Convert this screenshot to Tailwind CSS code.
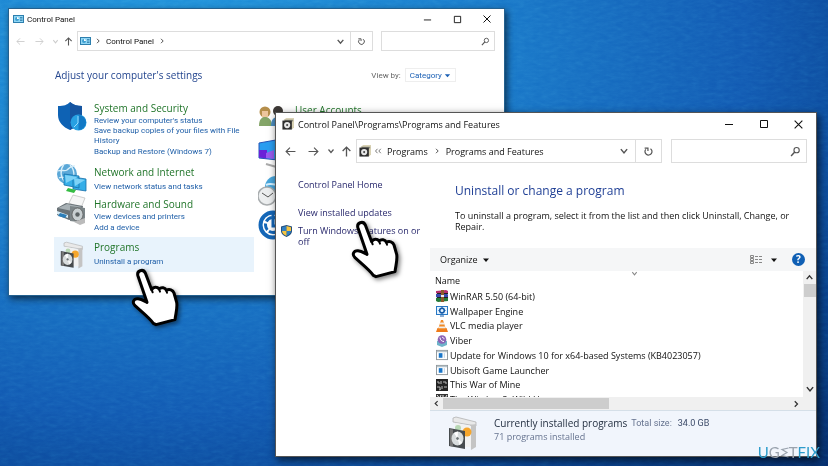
<!DOCTYPE html>
<html lang="en">
<head>
    <meta charset="UTF-8">
    <meta name="viewport" content="width=device-width, initial-scale=1.0">
    <title>Programs and Features</title>
    <script src="https://cdn.jsdelivr.net/npm/@tailwindcss/browser@4"></script>
</head>

<body class="font-['Open_Sans','Noto_Sans',sans-serif] text-[9px] leading-[11px] text-[#111]">
    <!-- shared icons -->
    <svg class="hidden">
        <symbol id="panel" viewBox="0 0 22 16">
            <rect x="1" y="1" width="20" height="14" fill="#8fd6f5" stroke="#2d7fae" stroke-width="2"/>
            <circle cx="8" cy="8" r="4" fill="#3f9fd0"/><path d="M8 8V4a4 4 0 0 1 4 4z" fill="#fff"/>
            <path d="M14 5h5M14 8h5M14 11h5" stroke="#27719f" stroke-width="1.5"/>
        </symbol>
        <symbol id="back" viewBox="0 0 10 10"><path d="M9.500 5H1M4.500 1.500L1 5l3.500 3.500" fill="none" stroke="currentColor"/></symbol>
        <symbol id="forward" viewBox="0 0 10 10"><path d="M.5 5H9M5.500 1.500L9 5 5.500 8.500" fill="none" stroke="currentColor"/></symbol>
        <symbol id="up" viewBox="0 0 10 10"><path d="M5 9.500V1M1.500 4.500L5 1l3.500 3.500" fill="none" stroke="currentColor" stroke-width="1.200"/></symbol>
        <symbol id="down" viewBox="0 0 8 8"><path d="M1.500 2.500L4 5.500l2.500-3" fill="none" stroke="currentColor" stroke-width="1.200"/></symbol>
        <symbol id="right" viewBox="0 0 8 8"><path d="M3 1.800L5.200 4 3 6.200" fill="none" stroke="currentColor"/></symbol>
        <symbol id="caret" viewBox="0 0 8 8"><path d="M1 2.500h6L4 6z" fill="currentColor"/></symbol>
        <symbol id="refresh" viewBox="0 0 10 10"><path d="M2.500 3A3.200 3.200 0 1 0 6.800 2.400M1.500 2h3v2.500" fill="none" stroke="currentColor" stroke-width="1.100"/></symbol>
        <symbol id="search" viewBox="0 0 10 10"><circle cx="6" cy="3.800" r="2.400" fill="none" stroke="currentColor"/><path d="M4.300 5.500L1 9" stroke="currentColor" stroke-width="1.300"/></symbol>
        <symbol id="min" viewBox="0 0 10 10"><path d="M1 5.500h8" stroke="currentColor"/></symbol>
        <symbol id="max" viewBox="0 0 10 10"><path d="M1.500 1.500h7v7h-7z" fill="none" stroke="currentColor"/></symbol>
        <symbol id="close" viewBox="0 0 10 10"><path d="M1.500 1.500l7 7M8.500 1.500l-7 7" stroke="currentColor"/></symbol>
        <symbol id="disc" viewBox="0 0 14 14">
            <path d="M2 2l3-2h9v11l-2 2z" fill="#d9d2b4"/><path d="M3 2h10v2H3z" fill="#8a8a7c"/>
            <rect x="0.500" y="3" width="11" height="10.500" fill="#2e2e2e"/>
            <circle cx="6" cy="8.300" r="3.600" fill="#e8e8e8"/><circle cx="6" cy="8.300" r="1.200" fill="#444"/>
        </symbol>
        <symbol id="box" viewBox="0 0 30 34">
            <path d="M5 2l3-1 20 5v4L5 6z" fill="#e9e9e9" stroke="#aaa" stroke-width=".7"/>
            <path d="M22 9l6-1v23l-5 3z" fill="#c4c4c4"/><path d="M7 7l16 3v21H7z" fill="#f1f1f1"/>
            <circle cx="19" cy="16" r="4.500" fill="#f6a62c"/><circle cx="10" cy="12" r="3" fill="#b7d7b4"/>
            <path d="M1 12l16 3v18L1 30z" fill="#474b4e"/><path d="M2 13l3 .5v17l-3-.5z" fill="#777"/>
            <ellipse cx="9.500" cy="22.500" rx="6" ry="7" fill="#d8dcdd"/><path d="M9.500 22.500L6 17l4-1.500z" fill="#fff"/>
            <path d="M9.500 22.500l5 4-3 2.500z" fill="#f8f8f8"/><circle cx="9.500" cy="22.500" r="1.800" fill="#6c7375" stroke="#fff" stroke-width=".7"/>
        </symbol>
        <symbol id="app" viewBox="0 0 13 12">
            <rect x=".5" y="1" width="12" height="10" fill="#fff" stroke="#8d9499"/><path d="M1 1.500h11v1.500H1z" fill="#b6c3cb"/>
            <rect x="3" y="4" width="4" height="5" fill="#1976c9"/><path d="M9 4v5" stroke="#bcd"/>
        </symbol>
        <symbol id="hand" viewBox="0 0 150 180">
            <path d="M24 24C19 8 39 1 46 15l19 50c5-9 17-9 22-2 7-7 19-4 22 4 9-6 20-1 23 8l8 28c3 18-3 34-5 52l-57 15-8-4C59 150 35 131 15 113 5 103 11 91 24 92c11 1 19 7 27 11z" fill="#fff" stroke="#000" stroke-width="9" stroke-linejoin="round"/>
            <path d="M65 65l3 8M87 63l3 8M109 67l2 7" stroke="#000" stroke-width="6" stroke-linecap="round"/>
        </symbol>
    </svg>

    <main class="relative min-h-screen overflow-hidden bg-[radial-gradient(ellipse_at_20%_10%,#2196dd_0%,#1a7fce_30%,#1159b2_62%,#083f8c_82%,#062c6c_100%)]">
        <svg class="absolute inset-0 h-full w-full opacity-40 mix-blend-soft-light" aria-hidden="true">
            <filter id="grain"><feTurbulence type="fractalNoise" baseFrequency=".12 .3" numOctaves="3"/><feColorMatrix type="saturate" values="0"/></filter>
            <rect width="100%" height="100%" filter="url(#grain)"/>
        </svg>

        <!-- Control Panel window -->
        <section class="absolute top-2 left-2 h-[288px] w-[60%] border border-[#24618f] bg-white font-[Roboto,sans-serif] text-[8px] shadow-[2px_3px_7px_rgba(0,0,0,.6)]">
            <header class="flex h-5 items-center pr-[2px] pl-1">
                <svg class="h-2 w-[11px]"><use href="#panel"/></svg>
                <h1 class="ml-[3px] flex-1">Control Panel</h1>
                <button aria-label="Minimize" class="flex w-[30px] justify-center"><svg class="size-[9px]"><use href="#min"/></svg></button>
                <button aria-label="Maximize" class="flex w-[29px] justify-center"><svg class="size-[9px]"><use href="#max"/></svg></button>
                <button aria-label="Close" class="flex w-[30px] justify-center"><svg class="size-[10px]"><use href="#close"/></svg></button>
            </header>
            <nav class="mt-[2px] flex h-5 items-center pr-[9px] pl-[7px] text-[#555]">
                <button aria-label="Back" class="text-[#ccc]"><svg class="size-[9px]"><use href="#back"/></svg></button>
                <button aria-label="Forward" class="ml-[10px] text-[#ccc]"><svg class="size-[9px]"><use href="#forward"/></svg></button>
                <button aria-label="Recent" class="ml-2 text-[#ccc]"><svg class="size-[7px]"><use href="#down"/></svg></button>
                <button aria-label="Up" class="ml-[5px]"><svg class="size-[9px]"><use href="#up"/></svg></button>
                <div class="ml-1 flex h-full flex-1 items-center border border-[#ddd] pl-[2px]">
                    <svg class="h-2 w-[11px]"><use href="#panel"/></svg>
                    <svg class="ml-[3px] size-2"><use href="#right"/></svg>
                    <a href="#" class="ml-1 text-[#111]">Control Panel</a>
                    <svg class="ml-1 size-2"><use href="#right"/></svg>
                    <button aria-label="Address history" class="mr-[5px] ml-auto"><svg class="size-[9px]"><use href="#down"/></svg></button>
                    <button aria-label="Refresh" class="flex h-full w-[22px] items-center justify-center border-l border-[#ddd]"><svg class="size-[9px]"><use href="#refresh"/></svg></button>
                </div>
                <label class="ml-2 flex h-full w-[114px] items-center border border-[#ddd] pr-1">
                    <input type="text" aria-label="Search Control Panel" class="min-w-0 flex-1 outline-none">
                    <svg class="size-[9px]"><use href="#search"/></svg>
                </label>
            </nav>
            <div class="mt-[17px] flex items-center pr-12 pl-[46px]">
                <h2 class="flex-1 font-['Open_Sans',sans-serif] text-[10px] leading-[14px] text-[#24468f]">Adjust your computer's settings</h2>
                <label for="view" class="text-[#666]">View by:</label>
                <div class="relative ml-1 flex items-center text-[#1a5fb4]">
                    <select id="view" class="h-[14px] w-[51px] appearance-none border border-[#eee] pl-1 outline-none"><option>Category</option></select>
                    <svg class="pointer-events-none absolute right-[5px] size-[7px]"><use href="#caret"/></svg>
                </div>
            </div>
            <div class="mt-5 grid grid-cols-[200px_1fr] gap-x-1 pl-[45px] text-[#1f5fa8]">
                <div>
                    <div class="flex h-16">
                        <svg class="ml-[3px] size-[30px]" viewBox="0 0 30 30">
                            <path d="M1 4c6 0 9-1 12-4 4 3 7 4 12 4v9c0 8-6 12-12 15C6 25 1 20 1 13z" fill="#0e62b4"/><path d="M13 0c4 3 7 4 12 4v9c0 8-6 12-12 15z" fill="#1554a0"/>
                            <circle cx="21.500" cy="20.500" r="8" fill="#27a0e2"/><path d="M21.500 20.500V13a7.500 7.500 0 0 1 0 15z" fill="#1279c5"/><path d="M21 14v7l-4 4" stroke="#9adcff" fill="none"/>
                        </svg>
                        <div class="ml-[7px] flex-1 pr-3">
                            <h3 class="font-['Open_Sans',sans-serif] text-[10px] leading-[13px] text-[#21752a]"><a href="#">System and Security</a></h3>
                            <a href="#" class="block">Review your computer's status</a>
                            <a href="#" class="block leading-[10px]">Save backup copies of your files with File History</a>
                            <a href="#" class="block">Backup and Restore (Windows 7)</a>
                        </div>
                    </div>
                    <div class="flex h-8">
                        <svg class="-mt-1 ml-[2px] size-[31px]" viewBox="0 0 31 31">
                            <circle cx="11" cy="12" r="10" fill="#5ba8d8"/><path d="M2 9c4-2 6 1 9-1s4-5 8-4M3 16c5-3 7 2 13-1M8 2c-5 7-3 14 2 20M14 3c5 5 5 12 1 18" stroke="#d9effa" stroke-width="1.300" fill="none"/>
                            <path d="M8 12l15 2v12L8 23zM17 15l13 2v12l-13-2z" fill="#35aee8" stroke="#176fa8" stroke-width=".8"/><path d="M9 13l13 2-12 6zM18 16l11 2-10 6z" fill="#7ed2f7"/><path d="M12 26l8 2-2 3-8-2z" fill="#35bc43"/>
                        </svg>
                        <div class="ml-[7px] flex-1">
                            <h3 class="font-['Open_Sans',sans-serif] text-[10px] leading-[13px] text-[#21752a]"><a href="#">Network and Internet</a></h3>
                            <a href="#" class="mt-[2px] block">View network status and tasks</a>
                        </div>
                    </div>
                    <div class="flex h-[39px]">
                        <svg class="-mt-1 ml-[2px] h-8 w-[31px]" viewBox="0 0 31 32">
                            <path d="M13 9l4-8 12 3-4 10z" fill="#f6f6f6" stroke="#bbb" stroke-width=".7"/><path d="M1 14l9-5 17 3-2 12-12 2-12-5z" fill="#697277"/><path d="M2 14l9-4 15 3-10 4z" fill="#a8b1b5"/><path d="M1 17l11 4v3L1 20z" fill="#d9edf7"/><path d="M4 19l7 2-2 3-7-2z" fill="#2b7db8"/>
                            <path d="M14 12l15 2v15l-15-2z" fill="#7c8588"/><ellipse cx="21.500" cy="20.500" rx="5.500" ry="6.500" fill="#c8cfd1" stroke="#555" stroke-width=".7"/><circle cx="21.500" cy="20.500" r="2.200" fill="#5b6264"/><path d="M18 28l11-4v5l-5 2z" fill="#bbb"/>
                        </svg>
                        <div class="ml-[7px] flex-1">
                            <h3 class="font-['Open_Sans',sans-serif] text-[10px] leading-[13px] text-[#21752a]"><a href="#">Hardware and Sound</a></h3>
                            <a href="#" class="block">View devices and printers</a>
                            <a href="#" class="block">Add a device</a>
                        </div>
                    </div>
                    <div class="flex h-[35px] bg-[#e8f3fc]">
                        <svg class="mt-1 ml-[6px] h-7 w-6"><use href="#box"/></svg>
                        <div class="ml-[10px] flex-1 pt-1">
                            <h3 class="font-['Open_Sans',sans-serif] text-[10px] leading-[13px] text-[#21752a]"><a href="#">Programs</a></h3>
                            <a href="#" class="mt-[2px] block">Uninstall a program</a>
                        </div>
                    </div>
                </div>
                <div>
                    <div class="flex h-8 pt-[2px]">
                        <svg class="mt-[2px] h-[22px] w-[30px]" viewBox="0 0 30 22"><circle cx="7" cy="6" r="5.500" fill="#b58e4b"/><path d="M4 5h6v6l-3 3-3-3z" fill="#edc59d"/><path d="M1 20c0-7 3-9 6-9s7 2 7 9z" fill="#84a568"/><circle cx="20" cy="5" r="5" fill="#3d3936"/><path d="M13 20c0-7 3-9 7-9s8 2 8 9z" fill="#4d8fc2"/></svg>
                        <h3 class="ml-[7px] font-['Open_Sans',sans-serif] text-[10px] leading-[13px] text-[#21752a]"><a href="#">User Accounts</a></h3>
                    </div>
                    <svg class="mt-1 h-8 w-[30px]" viewBox="0 0 30 32"><path d="M1 5l28-5v23L1 20z" fill="#2a9df0" stroke="#2556b8"/><path d="M1 12h8v8.500l-8-1z" fill="#6a21d8"/><path d="M8 15l8-3v9l-8-1z" fill="#9a5cf0"/><path d="M8 26l14 4" stroke="#aaa" stroke-width="2"/></svg>
                    <svg class="mt-[6px] size-[30px]" viewBox="0 0 30 30"><circle cx="18" cy="11" r="11" fill="#48a6dc"/><path d="M8 9c6-3 9 2 15-2" stroke="#d5f0ff" stroke-width="2" fill="none"/><circle cx="9" cy="20" r="9" fill="#eceeef" stroke="#a9adaf" stroke-width="1.500"/><path d="M4 17l6 4 5-4" stroke="#555" fill="none"/></svg>
                    <svg class="mt-1 size-[30px]" viewBox="0 0 30 30"><circle cx="15" cy="15" r="12.500" fill="#fff" stroke="#1467b8" stroke-width="4"/><circle cx="15" cy="15" r="7.500" fill="none" stroke="#1467b8" stroke-width="3" stroke-dasharray="7 2"/><path d="M15 4v12h8" stroke="#1467b8" stroke-width="3" fill="none"/></svg>
                </div>
            </div>
        </section>
        <svg class="absolute top-[268px] left-[130px] h-[60px] w-[50px] drop-shadow-[2px_2px_2px_rgba(0,0,0,.5)]"><use href="#hand"/></svg>

        <!-- Programs and Features window -->
        <section class="absolute top-28 right-[11px] bottom-[9px] left-[275px] flex flex-col border border-[#555] bg-white shadow-[2px_3px_8px_rgba(0,0,0,.7)]">
            <header class="flex h-[22px] shrink-0 items-center pl-[6px]">
                <svg class="size-3"><use href="#disc"/></svg>
                <h1 class="ml-1 flex-1">Control Panel\Programs\Programs and Features</h1>
                <button aria-label="Minimize" class="flex w-[35px] justify-center"><svg class="size-[10px]"><use href="#min"/></svg></button>
                <button aria-label="Maximize" class="flex w-[35px] justify-center"><svg class="size-[10px]"><use href="#max"/></svg></button>
                <button aria-label="Close" class="flex w-[35px] justify-center"><svg class="size-[11px]"><use href="#close"/></svg></button>
            </header>
            <nav class="mt-1 flex h-6 shrink-0 items-center pr-[9px] pl-[9px] text-[#555]">
                <button aria-label="Back"><svg class="size-[11px]"><use href="#back"/></svg></button>
                <button aria-label="Forward" class="ml-3"><svg class="size-[11px]"><use href="#forward"/></svg></button>
                <button aria-label="Recent" class="ml-2"><svg class="size-2"><use href="#down"/></svg></button>
                <button aria-label="Up" class="ml-[6px]"><svg class="size-[11px]"><use href="#up"/></svg></button>
                <div class="ml-1 flex h-full flex-1 items-center border border-[#ddd] pl-[2px]">
                    <svg class="size-3"><use href="#disc"/></svg>
                    <svg class="ml-[3px] size-2" viewBox="0 0 8 8"><path d="M3.500 1.800L1.500 4l2 2.200M6.800 1.800L4.800 4l2 2.200" fill="none" stroke="currentColor" stroke-width=".8"/></svg>
                    <a href="#" class="ml-[5px] text-[#111]">Programs</a>
                    <svg class="mx-[5px] size-2"><use href="#right"/></svg>
                    <a href="#" class="text-[#111]">Programs and Features</a>
                    <button aria-label="Address history" class="mr-[6px] ml-auto"><svg class="size-[10px]"><use href="#down"/></svg></button>
                    <button aria-label="Refresh" class="flex h-full w-[26px] items-center justify-center border-l border-[#ddd]"><svg class="size-[11px]"><use href="#refresh"/></svg></button>
                </div>
                <label class="ml-[9px] flex h-full w-[136px] items-center border border-[#ddd] pr-[5px]">
                    <input type="text" aria-label="Search Programs and Features" class="min-w-0 flex-1 outline-none">
                    <svg class="size-[11px]"><use href="#search"/></svg>
                </label>
            </nav>
            <div class="flex min-h-0 flex-1">
                <aside class="w-[154px] shrink-0 pt-4 pr-2 pl-[22px] text-[#28286c]">
                    <a href="#" class="block">Control Panel Home</a>
                    <a href="#" class="mt-[17px] block">View installed updates</a>
                    <a href="#" class="relative mt-[7px] block">
                        <svg class="absolute top-0 -left-[17px] h-3 w-[11px]" viewBox="0 0 11 12"><path d="M0 1.500L5.500 0 11 1.500V6c0 3-3 5-5.500 6C3 11 0 9 0 6z" fill="#244e7c"/><path d="M5.500 1L1 2.200V6h4.500zM5.500 6H10c0 2-2 4-4.500 5z" fill="#2f7fc2"/><path d="M5.500 1L10 2.200V6H5.500zM1 6h4.500v5C3 10 1 8 1 6z" fill="#f6c540"/></svg>
                        Turn Windows features on or off
                    </a>
                </aside>
                <div class="flex min-w-0 flex-1 flex-col">
                    <div class="h-[85px] shrink-0 pt-5 pl-[25px]">
                        <h2 class="text-[12px] leading-4 text-[#1f3f95]">Uninstall or change a program</h2>
                        <p class="mt-[11px] pr-6">To uninstall a program, select it from the list and then click Uninstall, Change, or Repair.</p>
                    </div>
                    <div class="flex h-[23px] shrink-0 items-center bg-[#f5f6f7] pr-[11px] pl-[10px]">
                        <button class="flex items-center gap-1">Organize <svg class="size-2"><use href="#caret"/></svg></button>
                        <button aria-label="Change your view" class="ml-auto flex items-center gap-2">
                            <svg class="h-[10px] w-3" viewBox="0 0 12 10" fill="none" stroke="#888"><path d="M.5.500h3v2h-3zM.5 3.500h3v2h-3zM.5 6.500h3v2h-3zM5 1.500h3M9 1.500h3M5 4.500h3M9 4.500h3M5 7.500h3M9 7.500h3"/></svg>
                            <svg class="size-2"><use href="#caret"/></svg>
                        </button>
                        <button aria-label="Help" class="ml-[14px] size-[13px] rounded-full bg-[#0f5fb4] text-[10px] leading-[13px] font-bold text-white">?</button>
                    </div>
                    <div class="relative flex min-h-0 flex-1">
                        <svg class="absolute -top-[1px] left-1/2 ml-2 size-[7px] text-[#888]"><use href="#down"/></svg>
                        <div class="min-w-0 flex-1 overflow-hidden">
                            <table class="h-[136px] w-full text-left leading-[13px]">
                                <thead><tr class="h-[18px]"><th class="pl-[5px] font-normal">Name</th></tr></thead>
                                <tbody>
                                    <tr><td class="pl-[6px]"><div class="flex items-center gap-[2px]"><svg class="h-3 w-3" viewBox="0 0 12 12"><path d="M0 1l10-1 2 1v2.500L2 4 0 3z" fill="#b5306d"/><path d="M0 4l10-.5 2 1V7L2 8 0 7z" fill="#394bb0"/><path d="M0 8l10-.5 2 .5v3L2 12 0 11z" fill="#257b39"/><path d="M1 3.500h11M1 7.500h11" stroke="#222"/><path d="M5 0h3v12H5z" fill="#8c5a2d"/><path d="M5 5h3v2H5z" fill="#eee"/></svg>WinRAR 5.50 (64-bit)</div></td></tr>
                                    <tr><td class="pl-[6px]"><div class="flex items-center gap-[2px]"><svg class="h-3 w-3" viewBox="0 0 12 12"><rect x=".5" y="1.500" width="11" height="8" fill="#e4f3ff" stroke="#2878c4"/><circle cx="6" cy="5.500" r="2.300" fill="none" stroke="#145ba9" stroke-width="1.600"/><path d="M6 1.800v1.500M6 8v1.500M2.500 5.500H4M8 5.500h1.500M4 11h4" stroke="#145ba9"/></svg>Wallpaper Engine</div></td></tr>
                                    <tr><td class="pl-[6px]"><div class="flex items-center gap-[2px]"><svg class="h-3 w-3" viewBox="0 0 12 12"><path d="M1.500 8h9l1.500 4H0z" fill="#ef7a19"/><path d="M5 0h2l3 9.500H2z" fill="#f28a25"/><path d="M4.300 2.500h3.400l.7 2H3.600zM3 6.500h6l.6 1.700H2.400z" fill="#eee"/></svg>VLC media player</div></td></tr>
                                    <tr><td class="pl-[6px]"><div class="flex items-center gap-[2px]"><svg class="h-3 w-3" viewBox="0 0 12 12"><path d="M1 6l5-2 5 2v4l-5 2-5-2z" fill="#6fb3c9"/><circle cx="6" cy="4.500" r="4.300" fill="#8b62b5"/><path d="M4 2.500c0 2.500 2 4 4 4M6 2.300c1.400 0 2 .8 2 2" stroke="#fff" fill="none"/></svg>Viber</div></td></tr>
                                    <tr><td class="pl-[6px]"><div class="flex items-center gap-[2px]"><svg class="h-3 w-3"><use href="#app"/></svg>Update for Windows 10 for x64-based Systems (KB4023057)</div></td></tr>
                                    <tr><td class="pl-[6px]"><div class="flex items-center gap-[2px]"><svg class="h-3 w-3"><use href="#app"/></svg>Ubisoft Game Launcher</div></td></tr>
                                    <tr><td class="pl-[6px]"><div class="flex items-center gap-[2px]"><svg class="h-3 w-3" viewBox="0 0 12 12"><path d="M0 0h12v12H0z" fill="#222"/><path d="M1 3h2v2M5 2v3M7 3h3v2M1 8h3v2M6 7v3M8 8h3M3 11l2-1" stroke="#bbb" fill="none"/></svg>This War of Mine</div></td></tr>
                                    <tr><td class="pl-[6px]"><div class="flex items-center gap-[2px]"><svg class="h-3 w-3" viewBox="0 0 12 12"><path d="M0 0h12v12H0z" fill="#333"/><path d="M1 1l4 5M5 1L3 6M7 1v5M11 1L8 6" stroke="#eee"/></svg>The Witcher 3: Wild Hunt</div></td></tr>
                                </tbody>
                            </table>
                        </div>
                        <div class="flex w-[13px] shrink-0 flex-col items-center bg-[#f0f0f0] text-[#333]">
                            <svg class="my-[2px] size-[9px] rotate-180"><use href="#down"/></svg>
                            <div class="h-[13px] w-3 bg-[#cdcdcd]"></div>
                            <svg class="mt-auto mb-[3px] size-[10px]"><use href="#down"/></svg>
                        </div>
                    </div>
                    <div class="flex h-[13px] shrink-0 items-center bg-[#f0f0f0] pr-[15px] text-[#333]">
                        <svg class="mx-[2px] size-[9px] rotate-180"><use href="#right"/></svg>
                        <div class="h-[11px] w-[166px] bg-[#cdcdcd]"></div>
                        <svg class="ml-auto size-[10px]"><use href="#right"/></svg>
                    </div>
                    <footer class="flex h-[46px] shrink-0 border-t border-[#d5dfe8] bg-[#f1f5fc] pl-[18px]">
                        <svg class="mt-[5px] h-[34px] w-[30px]"><use href="#box"/></svg>
                        <div class="ml-4 pt-[5px]">
                            <div class="flex items-center font-[Roboto,sans-serif] leading-[14px] text-[#3b4a68]">
                                <span class="font-['Open_Sans',sans-serif] text-[10px] text-[#1e2a3c]">Currently installed programs</span>
                                <span class="ml-1 text-[#66738f]">Total size:</span>
                                <span class="ml-[6px]">34.0 GB</span>
                            </div>
                            <p class="leading-[14px] text-[#66738f]">71 programs installed</p>
                        </div>
                    </footer>
                </div>
            </div>
        </section>
        <svg class="absolute top-[220px] left-[350px] h-[60px] w-[50px] drop-shadow-[2px_2px_2px_rgba(0,0,0,.5)]"><use href="#hand"/></svg>

        <p class="absolute right-2 bottom-[6px] flex items-center font-['Lato',sans-serif] text-[15px] leading-4 text-[#2d9ccb]">U<span class="text-[#9aa3ae]">G</span><svg class="h-[11px] w-[9px]" viewBox="0 0 9 11" role="img" aria-label="E"><path d="M8.500 1L2 2.500l5 3-5 3L8.500 10" fill="none" stroke="#9aa3ae" stroke-width="1.200"/></svg><span class="text-[#9aa3ae]">T</span>FIX</p>
    </main>
</body>
</html>
